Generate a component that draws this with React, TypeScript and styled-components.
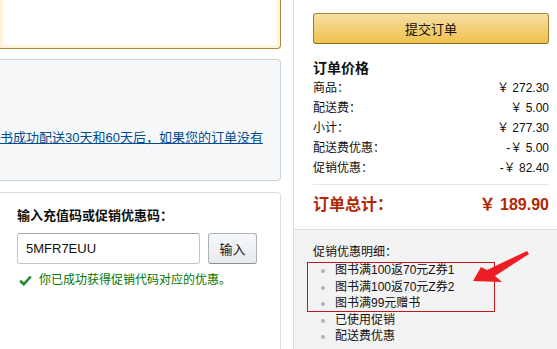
import styled, { createGlobalStyle } from "styled-components";

const GlobalStyle = createGlobalStyle`
  body {
    margin: 0;
    font-family: "Liberation Sans", "Noto Sans CJK SC", sans-serif;
    font-size: 12px;
    color: #111;
    background: #fff;
  }
`;

const Page = styled.div`
  display: flex;
  gap: 12px;
  height: 349px;
  overflow: hidden;
`;

const LeftColumn = styled.div`
  width: 281px;
  flex-shrink: 0;
  display: flex;
  flex-direction: column;
`;

const NoticeBox = styled.div`
  box-sizing: border-box;
  height: 54px;
  margin-top: -5px;
  border: 1px solid #a88734;
  border-left: 0;
  border-radius: 0 4px 4px 0;
  box-shadow: inset 0 0 2px 3px #fef3d8;
  background: #fff;
`;

const InfoBox = styled.div`
  box-sizing: border-box;
  height: 122px;
  margin-top: 10px;
  padding-top: 69px;
  border: 1px solid #c9d2db;
  border-left: 0;
  border-radius: 0 4px 4px 0;
  background: #f7f8fa;
`;

const InfoLink = styled.a`
  display: block;
  font-size: 13px;
  line-height: 18px;
  color: #004b91;
  text-decoration: underline;
  white-space: nowrap;
`;

const PromoBox = styled.div`
  flex: 1;
  margin-top: 11px;
  padding: 13px 17px 0;
  border: 1px solid #ddd;
  border-left: 0;
  border-bottom: 0;
  border-radius: 0 4px 0 0;
`;

const PromoLabel = styled.div`
  font-size: 13px;
  font-weight: bold;
  line-height: 20px;
`;

const PromoRow = styled.div`
  display: flex;
  gap: 8px;
  margin-top: 7px;
`;

const CodeInput = styled.input`
  box-sizing: border-box;
  width: 183px;
  height: 31px;
  padding: 0 8px;
  border: 1px solid #c6c6c6;
  border-top-color: #a6a6a6;
  border-radius: 3px;
  font-family: "Liberation Sans", sans-serif;
  font-size: 13px;
  color: #111;
  outline: none;
`;

const ApplyButton = styled.button`
  box-sizing: border-box;
  width: 49px;
  height: 31px;
  border: 1px solid #adb1b8;
  border-bottom-color: #8d9096;
  border-radius: 3px;
  background: linear-gradient(to bottom, #f7f8fa, #e7e9ec);
  font-family: "Liberation Sans", "Noto Sans CJK SC", sans-serif;
  font-size: 13px;
  color: #111;
  padding: 0;
`;

const SuccessMessage = styled.div`
  display: flex;
  align-items: center;
  gap: 7px;
  margin-top: 7px;
  padding-left: 2px;
  line-height: 18px;
  color: #007600;
`;

const SummaryPanel = styled.div`
  flex: 1;
  display: flex;
  flex-direction: column;
  border-left: 1px solid #ddd;
`;

const SummarySection = styled.div`
  padding: 13px 8px 12px 19px;
  border-bottom: 1px solid #ddd;
`;

const SubmitButton = styled.button`
  box-sizing: border-box;
  display: block;
  width: 100%;
  height: 31px;
  padding: 0;
  border: 1px solid;
  border-color: #a88734 #9c7e31 #846a29;
  border-radius: 3px;
  background: linear-gradient(to bottom, #f7dfa5, #f0c14b);
  font-family: "Liberation Sans", "Noto Sans CJK SC", sans-serif;
  font-size: 13px;
  color: #111;
`;

const SummaryTitle = styled.div`
  margin-top: 14px;
  font-size: 14px;
  font-weight: bold;
  line-height: 20px;
`;

const PriceRow = styled.div`
  display: flex;
  justify-content: space-between;
  line-height: 20px;
`;

const TotalRow = styled.div`
  display: flex;
  justify-content: space-between;
  margin-top: 6px;
  padding-top: 8px;
  border-top: 1px solid #e7e7e7;
  font-size: 16px;
  font-weight: bold;
  line-height: 24px;
  color: #b12704;
`;

const PromoDetails = styled.div`
  position: relative;
  flex: 1;
  padding: 13px 8px 0 19px;
  background: #f3f3f3;
`;

const DetailsTitle = styled.div`
  line-height: 19px;
`;

const DetailsList = styled.ul`
  margin: 0;
  padding: 0;
  list-style: none;
`;

const DetailsItem = styled.li`
  position: relative;
  padding-left: 22px;
  line-height: 16.5px;
  white-space: nowrap;

  &::before {
    content: "";
    position: absolute;
    left: 8px;
    top: 7px;
    width: 4px;
    height: 4px;
    border-radius: 50%;
    background: #b3b3b3;
  }
`;

const Highlight = styled.div`
  position: absolute;
  left: 13px;
  top: 32px;
  width: 188px;
  height: 50px;
  box-sizing: border-box;
  border: 1px solid #c4161c;
`;

const Arrow = styled.svg`
  position: absolute;
  left: 171px;
  top: 16px;
`;

const prices = [
  { label: "商品：", value: "￥ 272.30" },
  { label: "配送费：", value: "￥ 5.00" },
  { label: "小计：", value: "￥ 277.30" },
  { label: "配送费优惠：", value: "-￥ 5.00" },
  { label: "促销优惠：", value: "-￥ 82.40" },
];

const promos = ["图书满100返70元Z券1", "图书满100返70元Z券2", "图书满99元赠书", "已使用促销", "配送费优惠"];

const App = () => {
  return (
    <Page>
      <GlobalStyle />
      <LeftColumn>
        <NoticeBox />
        <InfoBox>
          <InfoLink href="#">书成功配送30天和60天后，如果您的订单没有</InfoLink>
        </InfoBox>
        <PromoBox>
          <PromoLabel>输入充值码或促销优惠码：</PromoLabel>
          <PromoRow>
            <CodeInput value="5MFR7EUU" readOnly />
            <ApplyButton>输入</ApplyButton>
          </PromoRow>
          <SuccessMessage>
            <svg width="13" height="11" viewBox="0 0 13 11">
              <path d="M1.2 5.8 L4.8 9.2 L11.8 1.5" fill="none" stroke="#1f8a2c" strokeWidth="2.6" />
            </svg>
            你已成功获得促销代码对应的优惠。
          </SuccessMessage>
        </PromoBox>
      </LeftColumn>
      <SummaryPanel>
        <SummarySection>
          <SubmitButton>提交订单</SubmitButton>
          <SummaryTitle>订单价格</SummaryTitle>
          {prices.map((p) => (
            <PriceRow key={p.label}>
              <span>{p.label}</span>
              <span>{p.value}</span>
            </PriceRow>
          ))}
          <TotalRow>
            <span>订单总计：</span>
            <span>￥ 189.90</span>
          </TotalRow>
        </SummarySection>
        <PromoDetails>
          <DetailsTitle>促销优惠明细：</DetailsTitle>
          <DetailsList>
            {promos.map((p) => (
              <DetailsItem key={p}>{p}</DetailsItem>
            ))}
          </DetailsList>
          <Highlight />
          <Arrow width="70" height="45" viewBox="0 0 70 45">
            <polygon points="8,35 16,21 22,24 62,5 64,8 30,30 37,36" fill="#ee1c25" />
          </Arrow>
        </PromoDetails>
      </SummaryPanel>
    </Page>
  );
};

export default App;
